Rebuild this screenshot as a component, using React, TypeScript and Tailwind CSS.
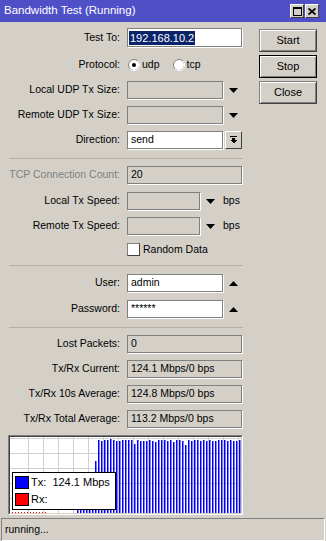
import React from "react";

const Tri = ({ up = false, cls = "" }: { up?: boolean; cls?: string }) => (
  <svg width="9" height="5" viewBox="0 0 9 5" className={cls}>
    {up ? <polygon points="0,5 9,5 4.5,0" fill="#000" /> : <polygon points="0,0 9,0 4.5,5" fill="#000" />}
  </svg>
);

const Label = ({ children, gray = false }: { children: React.ReactNode; gray?: boolean }) => (
  <div className={gray ? "w-[112px] text-right text-[#808080] whitespace-nowrap" : "w-[112px] text-right text-black whitespace-nowrap"}>
    {children}
  </div>
);

const boxBase =
  "h-[18px] border border-[#808080] shadow-[1px_1px_0_#ffffff] flex items-center pl-[3px] text-black whitespace-nowrap overflow-hidden";

const Sep = ({ cls }: { cls: string }) => (
  <div className={cls + " ml-[1px] w-[234px] h-[1px] bg-[#b4b0a8]"} />
);

const bottomTops = [
  3, 4, 3, 3, 2, 3, 4, 4, 3, 3, 3, 3, 7, 3, 4, 4, 4, 3, 4, 5, 3, 3, 3, 4, 3, 5, 3, 3, 4, 8, 3, 4, 3, 3, 4, 3, 4, 3, 4, 4,
  3, 3, 3, 4, 3, 4, 4, 3, 4,
];

function Graph() {
  const bars: { x: number; top: number }[] = [];
  for (let k = 0; k < 55; k++) {
    const x = 67 + 3 * k;
    let top: number;
    if (k < 6) top = 40;
    else if (k === 6) top = 24;
    else top = bottomTops[(k - 7) % bottomTops.length];
    bars.push({ x, top });
  }
  const vlines: number[] = [];
  for (let x = 18; x < 231; x += 15) vlines.push(x);
  const hlines = [1, 16, 31, 46, 61];
  return (
    <div className="mt-[7px] w-[235px] h-[80px] border-t border-l border-t-[#808080] border-l-[#808080] border-r border-b border-r-white border-b-white">
      <div className="relative w-full h-full border-t border-l border-t-[#404040] border-l-[#404040] border-r border-b border-r-[#d4d0c8] border-b-[#d4d0c8] bg-white">
        <svg width="231" height="76" viewBox="0 0 231 76" className="block">
          {vlines.map((x) => (
            <rect key={"v" + x} x={x} y={0} width={1} height={76} fill="#d0d0d0" />
          ))}
          {hlines.map((y) => (
            <rect key={"h" + y} x={0} y={y} width={231} height={1} fill="#d0d0d0" />
          ))}
          {bars.map((b, i) => (
            <rect key={"b" + i} x={b.x} y={b.top} width={1.5} height={76 - b.top} fill="#0000ff" />
          ))}
          {[2, 5, 8, 11, 14, 17, 20, 23, 26, 29, 32, 35].map((x) => (
            <rect key={"r" + x} x={x} y={75} width={1} height={1} fill="#ff0000" />
          ))}
        </svg>
        <div className="absolute left-[2px] top-[35px] w-[104px] h-[38px] bg-white border border-black flex flex-col pl-[2px] pt-[3px] gap-[4px] text-[11px] text-black">
          <div className="flex items-center h-[13px]">
            <div className="w-[14px] h-[13px] bg-[#0000ff] border border-black" />
            <span className="ml-[2px] whitespace-pre">Tx:  124.1 Mbps</span>
          </div>
          <div className="flex items-center h-[13px]">
            <div className="w-[14px] h-[13px] bg-[#ff0000] border border-black" />
            <span className="ml-[2px]">Rx:</span>
          </div>
        </div>
      </div>
    </div>
  );
}

const Radio = ({ checked }: { checked: boolean }) => (
  <svg width="12" height="12" viewBox="0 0 12 12">
    <circle cx="6" cy="6" r="5.5" fill="#ffffff" stroke="#808080" strokeWidth="1" />
    <path d="M10 2 A5.5 5.5 0 0 1 2 10" fill="none" stroke="#ffffff" strokeWidth="1" />
    {checked && <circle cx="6" cy="6" r="2" fill="#000" />}
  </svg>
);

const WinBtn = ({ children, cls }: { children: React.ReactNode; cls: string }) => (
  <div
    className={
      cls +
      " w-[58px] h-[23px] flex items-center justify-center text-[11px] text-black bg-[#d4d0c8] shadow-[inset_1px_1px_0_#ffffff,inset_-1px_-1px_0_#808080]"
    }
  >
    {children}
  </div>
);

export default function App() {
  return (
    <div className="w-[326px] h-[541px] bg-[#d4d0c8] font-['Liberation_Sans',Arial,sans-serif] text-[10.5px] flex flex-col overflow-hidden">
      {/* Title bar */}
      <div className="h-[22px] bg-[#4f4fc8] flex items-center pl-[4px] pr-[7px] shrink-0">
        <span className="text-white text-[11.5px] flex-1">Bandwidth Test (Running)</span>
        <div className="w-[14px] h-[14px] bg-[#d4d0c8] border border-t-white border-l-white border-r-[#404040] border-b-[#404040] flex items-center justify-center">
          <svg width="9" height="9" viewBox="0 0 9 9" shapeRendering="crispEdges">
            <rect x="0.5" y="0.5" width="8" height="8" fill="none" stroke="#000" />
            <rect x="0" y="0" width="9" height="2" fill="#000" />
          </svg>
        </div>
        <div className="ml-[1px] w-[14px] h-[14px] bg-[#d4d0c8] border border-t-white border-l-white border-r-[#404040] border-b-[#404040] flex items-center justify-center">
          <svg width="8" height="7" viewBox="0 0 8 7">
            <path d="M0.5 0.5 L7.5 6.5 M7.5 0.5 L0.5 6.5" stroke="#000" strokeWidth="1.8" />
          </svg>
        </div>
      </div>

      <div className="flex">
        {/* Left column */}
        <div className="ml-[8px] w-[235px] flex flex-col">
          {/* Test To */}
          <div className="mt-[6px] h-[19px] flex items-center">
            <Label>Test To:</Label>
            <div className="ml-[7px] w-[115px] h-[19px] bg-white border border-[#808080] shadow-[1px_1px_0_#ffffff] flex items-center pl-[1px]">
              <span className="bg-[#0a246a] text-white px-[1px] leading-[14px] text-[11px]">192.168.10.2</span>
            </div>
          </div>
          {/* Protocol */}
          <div className="mt-[9px] h-[17px] flex items-center">
            <Label>Protocol:</Label>
            <div className="ml-[8px] flex items-center">
              <Radio checked />
              <span className="ml-[2px]">udp</span>
              <div className="ml-[13px] flex items-center">
                <Radio checked={false} />
                <span className="ml-[2px]">tcp</span>
              </div>
            </div>
          </div>
          {/* Local UDP Tx Size */}
          <div className="mt-[8px] h-[18px] flex items-center">
            <Label>Local UDP Tx Size:</Label>
            <div className={boxBase + " ml-[7px] w-[96px] bg-[#d4d0c8]"} />
            <Tri cls="ml-[6px]" />
          </div>
          <div className="mt-[7px] h-[18px] flex items-center">
            <Label>Remote UDP Tx Size:</Label>
            <div className={boxBase + " ml-[7px] w-[96px] bg-[#d4d0c8]"} />
            <Tri cls="ml-[6px]" />
          </div>
          {/* Direction */}
          <div className="mt-[7px] h-[18px] flex items-center">
            <Label>Direction:</Label>
            <div className={boxBase + " ml-[7px] w-[96px] bg-white"}>send</div>
            <div className="ml-[2px] w-[17px] h-[18px] bg-[#d4d0c8] border border-t-white border-l-white border-r-[#404040] border-b-[#404040] flex items-center justify-center">
              <svg width="7" height="8" viewBox="0 0 7 8" shapeRendering="crispEdges">
                <rect x="0" y="0" width="7" height="1" fill="#000" />
                <rect x="2" y="2" width="3" height="2" fill="#000" />
                <polygon points="0,4 7,4 3.5,7.5" fill="#000" />
              </svg>
            </div>
          </div>
          <Sep cls="mt-[9px]" />
          {/* TCP connection count */}
          <div className="mt-[7px] h-[18px] flex items-center">
            <Label gray>TCP Connection Count:</Label>
            <div className={boxBase + " ml-[7px] w-[115px] bg-[#d4d0c8]"}>20</div>
          </div>
          <div className="mt-[8px] h-[18px] flex items-center">
            <Label>Local Tx Speed:</Label>
            <div className={boxBase + " ml-[7px] w-[73px] bg-[#d4d0c8]"} />
            <Tri cls="ml-[6px]" />
            <span className="ml-[8px]">bps</span>
          </div>
          <div className="mt-[7px] h-[18px] flex items-center">
            <Label>Remote Tx Speed:</Label>
            <div className={boxBase + " ml-[7px] w-[73px] bg-[#d4d0c8]"} />
            <Tri cls="ml-[6px]" />
            <span className="ml-[8px]">bps</span>
          </div>
          <div className="mt-[8px] h-[13px] flex items-center">
            <div className="ml-[119px] w-[13px] h-[13px] bg-white border border-t-[#808080] border-l-[#808080] border-r-[#404040] border-b-[#404040]" />
            <span className="ml-[3px]">Random Data</span>
          </div>
          <Sep cls="mt-[9px]" />
          {/* User */}
          <div className="mt-[8px] h-[18px] flex items-center">
            <Label>User:</Label>
            <div className={boxBase + " ml-[7px] w-[96px] bg-white"}>admin</div>
            <Tri up cls="ml-[6px]" />
          </div>
          <div className="mt-[8px] h-[18px] flex items-center">
            <Label>Password:</Label>
            <div className={boxBase + " ml-[7px] w-[96px] bg-white"}>******</div>
            <Tri up cls="ml-[6px]" />
          </div>
          <Sep cls="mt-[9px]" />
          <div className="mt-[7px] h-[18px] flex items-center">
            <Label>Lost Packets:</Label>
            <div className={boxBase + " ml-[7px] w-[115px] bg-[#d4d0c8]"}>0</div>
          </div>
          <div className="mt-[7px] h-[18px] flex items-center">
            <Label>Tx/Rx Current:</Label>
            <div className={boxBase + " ml-[7px] w-[115px] bg-[#d4d0c8]"}>124.1 Mbps/0 bps</div>
          </div>
          <div className="mt-[7px] h-[18px] flex items-center">
            <Label>Tx/Rx 10s Average:</Label>
            <div className={boxBase + " ml-[7px] w-[115px] bg-[#d4d0c8]"}>124.8 Mbps/0 bps</div>
          </div>
          <div className="mt-[7px] h-[18px] flex items-center">
            <Label>Tx/Rx Total Average:</Label>
            <div className={boxBase + " ml-[7px] w-[115px] bg-[#d4d0c8]"}>113.2 Mbps/0 bps</div>
          </div>
          <Graph />
        </div>

        {/* Right column buttons */}
        <div className="ml-[16px] flex flex-col">
          <WinBtn cls="mt-[7px] border border-t-[#808080] border-l-[#808080] border-r-[#404040] border-b-[#404040]">Start</WinBtn>
          <WinBtn cls="mt-[3px] border border-black">Stop</WinBtn>
          <WinBtn cls="mt-[3px] border border-t-[#808080] border-l-[#808080] border-r-[#404040] border-b-[#404040]">Close</WinBtn>
        </div>
      </div>

      {/* Status bar */}
      <div className="mt-[3px] mx-[1px] h-[23px] border border-t-[#808080] border-l-[#808080] border-r-white border-b-white flex items-center pl-[3px] text-black">
        running...
      </div>
    </div>
  );
}
